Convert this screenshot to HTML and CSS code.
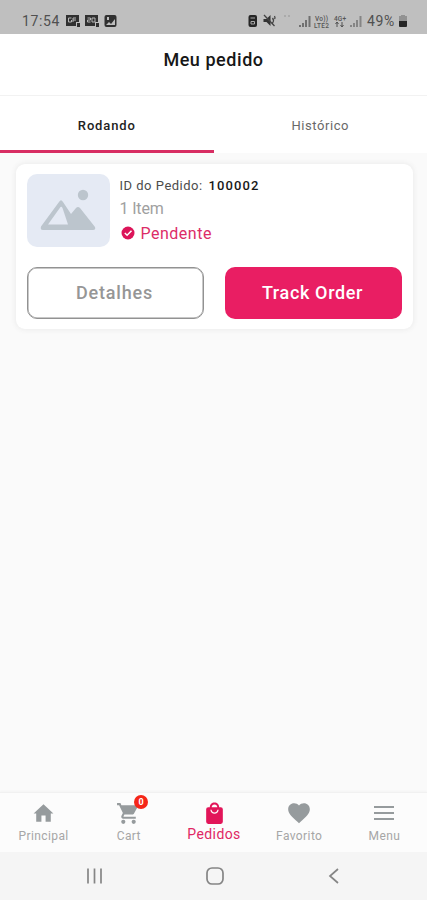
FILE: index.html
```html
<!DOCTYPE html>
<html lang="pt">
<head>
<meta charset="utf-8">
<title>Meu pedido</title>
<link rel="stylesheet" href="styles.css">
</head>
<body>
<div class="screen">
  <div class="status">
    <span class="clock">17:54</span>
    <svg class="apps" width="54" height="14" viewBox="0 0 54 14">
      <g fill="#303030"><path d="M1 1h13v7h-3v4H1zM20 1h13v7h-3v4H20z"/><rect x="39.500" y="1" width="12" height="12" rx="2"/><path d="M12 9h3v4h-3zM31 9h3v4h-3z"/></g>
      <path d="M6.500 4H3.500v4h3V6M8 8V4h3M8 6h3M22.500 4h3v2h-3v2h3M27 4v4h3V4z" fill="none" stroke="#b5b5b5"/>
      <path d="M42 3h2v3h-2zM41 11l3-3 2 2 4-5v6z" fill="#bdbdbd"/>
    </svg>
    <svg class="signals" width="114" height="16" viewBox="0 0 114 16">
      <rect x="0.500" y="2" width="8.500" height="12" rx="2" fill="#252525"/><path d="M2.500 5h4.500M3 8.500h3.500v2.500H3z" stroke="#aaa" fill="none"/>
      <path d="M15.500 6h3l4-4v11l-4-4h-3z" fill="#333"/><path d="M16 2l10.500 11M24.500 5q2 2.500 0 5M26.500 3q1 2 0 3" fill="none" stroke="#444" stroke-width="1.300"/>
      <path d="M36 3h2M40 3h2" stroke="#aaa" stroke-width="2"/>
      <path d="M52 14v-2M55 14v-4M58 14V7M61.500 14V3" stroke="#707070" stroke-width="2"/>
      <g class="tiny"><text x="67" y="8" textLength="13">Vo))</text><text x="66" y="15" textLength="15">LTE2</text><text x="86" y="8" textLength="12">4G+</text></g>
      <path d="M89 14V9m-1.500 2L89 9l1.500 2M94 9v5m-1.500-2l1.500 2 1.500-2" fill="none" stroke="#505050"/>
      <path d="M103 14v-2M106 14v-4M109 14V7M112.500 14V3" stroke="#858585" stroke-width="2"/>
    </svg>
    <span class="percent">49%</span>
    <svg class="battery" width="10" height="14" viewBox="0 0 10 14"><path d="M3 1h4v1h2v5H1V2h2z" fill="#929292"/><path d="M1 7h8v5q0 1-1 1H2q-1 0-1-1z" fill="#252525"/></svg>
  </div>
  <header class="appbar"><h1>Meu pedido</h1></header>
  <div class="tabs">
    <div class="tab active"><span>Rodando</span></div>
    <div class="tab"><span>Histórico</span></div>
  </div>
  <main>
    <section class="card">
      <div class="order">
        <div class="thumb">
          <svg width="83" height="73" viewBox="0 0 83 73"><circle cx="56" cy="21" r="5.200" fill="#bcc5cd"/><path d="M14 52.500L32 28q2-3.500 4 0l8 12 5-6q2-2 4 0l15 19q1 3-2 3H16q-3 0-2-3.500z" fill="#bcc5cd"/><path d="M21 50.500L33.500 33q1-1 2 1l5.500 16.500z" fill="#e5eaf4"/></svg>
        </div>
        <div class="info">
          <div class="id">ID do Pedido: <b>100002</b></div>
          <div class="items">1 Item</div>
          <div class="state"><svg width="14" height="14" viewBox="0 0 14 14"><circle cx="7" cy="7" r="6.500" fill="#dc1459"/><path d="M3.800 7l2.300 2.300 4.400-4.600" fill="none" stroke="#fff" stroke-width="1.500"/></svg><span>Pendente</span></div>
        </div>
      </div>
      <div class="actions">
        <div class="btn outline"><span>Detalhes</span></div>
        <div class="btn filled"><span>Track Order</span></div>
      </div>
    </section>
  </main>
  <nav class="bottom">
    <div class="item"><span class="icon"><svg width="25" height="25" viewBox="0 0 24 24"><path d="M10 20v-6h4v6h5v-8h2.500L12 3 2.500 12H5v8z"/></svg></span><span class="label">Principal</span></div>
    <div class="item"><span class="icon"><svg width="25" height="25" viewBox="0 0 24 24"><path d="M1 2v2h2l3.600 7.590-1.350 2.450C4.520 15.370 5.480 17 7 17h12v-2H7.420a.25.25 0 0 1-.25-.25L8.100 13h7.450c.75 0 1.410-.41 1.750-1.030L21 5.200A1 1 0 0 0 20 4H5.210L4.270 2z"/><circle cx="7" cy="20" r="2"/><circle cx="17" cy="20" r="2"/></svg></span><b class="badge">0</b><span class="label">Cart</span></div>
    <div class="item selected"><span class="icon"><svg width="25" height="25" viewBox="0 0 24 24"><path fill-rule="evenodd" d="M18 6h-1.500C16.500 3.500 14.500 1.500 12 1.500S7.500 3.500 7.500 6H6q-2 0-2 2v12q0 2 2 2h12q2 0 2-2V8q0-2-2-2zM12 3.300c1.500 0 2.700 1.200 2.700 2.700H9.300c0-1.500 1.200-2.700 2.700-2.700zM8 8.300h1.200c.3 1.600 1.300 2.700 2.800 2.700s2.500-1.100 2.800-2.700H16c-.3 2.400-1.900 4-4 4s-3.700-1.600-4-4z"/></svg></span><span class="label pedidos">Pedidos</span></div>
    <div class="item"><span class="icon"><svg width="26" height="26" viewBox="0 0 24 24"><path d="M12 21.350l-1.450-1.320C5.400 15.360 2 12.280 2 8.500 2 5.420 4.420 3 7.500 3c1.740 0 3.410.81 4.500 2.090C13.090 3.810 14.760 3 16.500 3 19.580 3 22 5.420 22 8.500c0 3.780-3.400 6.860-8.550 11.540z"/></svg></span><span class="label">Favorito</span></div>
    <div class="item"><span class="icon"><svg width="26" height="26" viewBox="0 0 26 26"><path d="M3 6h20v2H3zM3 12h20v2H3zM3 18h20v2H3z"/></svg></span><span class="label">Menu</span></div>
  </nav>
  <div class="system">
    <svg width="18" height="18" viewBox="0 0 18 18"><path d="M2 1.500v15M8.500 1.500v15M15 1.500v15"/></svg>
    <svg width="18" height="18" viewBox="0 0 18 18"><rect x="1" y="1" width="16" height="16" rx="5"/></svg>
    <svg width="18" height="18" viewBox="0 0 18 18"><path d="M13 2L5 9l8 7"/></svg>
  </div>
</div>
</body>
</html>
```
FILE: styles.css
```css
* { box-sizing: border-box; }
body { margin: 0; font-family: Roboto, "Liberation Sans", sans-serif; background: #fafafa; }
svg { display: block; flex: none; }
.screen { width: 427px; height: 900px; display: flex; flex-direction: column; overflow: hidden; }
.status { height: 34px; flex: none; background: #bfbfbf; display: flex; align-items: center; padding: 7px 19px 0 22px; color: #505050; font-size: 14px; line-height: 16px; }
.clock { width: 43px; letter-spacing: 0.65px; white-space: nowrap; }
.signals { margin-left: 129px; }
.tiny { font-size: 6.5px; font-weight: 500; fill: #555; }
.percent { width: 31px; margin-left: 5px; letter-spacing: 0.6px; }
.battery { margin-right: -2px; }
.appbar { height: 62px; flex: none; background: #fff; border-bottom: 1px solid #f2f2f2; text-align: center; padding-top: 15px; }
h1 { margin: 0; font-size: 18px; line-height: 22px; font-weight: 500; letter-spacing: 0.55px; color: #171717; }
.tabs { height: 57px; flex: none; display: flex; background: #fff; }
.tab { flex: 1; text-align: center; font-size: 13px; line-height: 16px; padding-top: 22px; color: #686868; letter-spacing: 0.55px; }
.tab.active { color: #222; font-weight: 500; border-bottom: 3px solid #d82e63; letter-spacing: 0.85px; }
main { flex: 1; padding: 11px 14.5px 0 15.5px; }
.card { height: 165px; background: #fff; border-radius: 9px; box-shadow: 0 0 5px 1px #ececec; padding: 10px 11px; }
.order { display: flex; gap: 10px; height: 93px; }
.thumb { width: 83px; height: 73px; border-radius: 10px; background: #e5eaf4; flex: none; }
.info { padding-top: 2px; }
.id { font-size: 13px; line-height: 19px; letter-spacing: 0.5px; color: #4c4c4c; white-space: nowrap; }
.id b { font-weight: 500; letter-spacing: 1.15px; color: #181818; margin-left: 2px; }
.items { font-size: 16px; line-height: 28px; height: 27px; letter-spacing: -0.15px; color: #a0a0a0; }
.state { display: flex; align-items: center; gap: 6px; height: 22px; color: #dc2d68; font-size: 16px; letter-spacing: 0.5px; padding-left: 1px; }
.actions { display: grid; grid-template-columns: 1fr 1fr; gap: 21px; }
.btn { height: 52px; border-radius: 10px; display: flex; align-items: center; justify-content: center; font-size: 18px; font-weight: 500; padding-bottom: 1px; }
.outline { border: 1px solid #929292; box-shadow: inset 0 0 0 0.5px #929292; color: #969696; letter-spacing: 0.8px; padding-right: 1px; }
.filled { background: #e91e63; color: #fff; letter-spacing: 0.65px; padding-right: 1px; }
.bottom { height: 60px; flex: none; display: flex; background: #fcfcfc; border-top: 1px solid #f1f1f1; box-shadow: 0 -1px 2px #f4f4f4; padding-left: 1px; }
.item { flex: 1; display: flex; flex-direction: column; align-items: center; position: relative; padding-top: 7px; font-size: 12px; color: #a6a6a6; }
.icon { width: 26px; height: 26px; display: flex; align-items: center; justify-content: center; }
.item svg { fill: #969b9d; }
.item.selected { color: #e02764; }
.item.selected svg { fill: #e21559; }
.label { line-height: 20px; letter-spacing: 0.4px; }
.item .pedidos { font-size: 14px; line-height: 16px; letter-spacing: 0.4px; }
.badge { position: absolute; left: 48px; top: 2px; width: 14px; height: 14px; border-radius: 50%; background: #f52618; color: #fff; text-align: center; font-size: 9px; line-height: 14px; }
.system { height: 48px; flex: none; display: flex; justify-content: space-between; background: #f5f5f5; padding: 15px 84px 0 86px; }
.system svg { fill: none; stroke: #858585; stroke-width: 1.7; }
```
